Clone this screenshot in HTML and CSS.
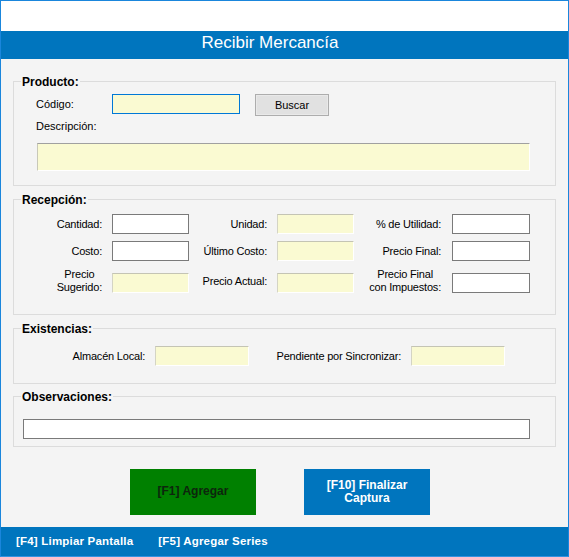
FILE: index.html
```html
<!DOCTYPE html>
<html lang="es">
<head>
<meta charset="utf-8">
<title>Recibir Mercancía</title>
<link rel="stylesheet" href="styles.css">
</head>
<body>
<div class="window">
  <div class="topbar"></div>
  <div class="header">Recibir Mercancía</div>
  <div class="content">
    <section class="group g-producto">
      <div class="group-title">Producto:</div>
      <div class="row-codigo">
        <span class="lbl lbl-codigo">Código:</span>
        <div class="field focus w128"></div>
        <button class="btn-buscar" type="button">Buscar</button>
      </div>
      <div class="lbl-desc">Descripción:</div>
      <div class="field ro desc"></div>
    </section>

    <section class="group g-recepcion">
      <div class="group-title">Recepción:</div>
      <div class="rec-grid">
        <span class="glbl c1">Cantidad:</span>
        <div class="field edit"></div>
        <span class="glbl c2">Unidad:</span>
        <div class="field ro"></div>
        <span class="glbl c3">% de Utilidad:</span>
        <div class="field edit"></div>

        <span class="glbl c1">Costo:</span>
        <div class="field edit"></div>
        <span class="glbl c2">Último Costo:</span>
        <div class="field ro"></div>
        <span class="glbl c3">Precio Final:</span>
        <div class="field edit"></div>

        <span class="glbl c1"><span class="two">Precio<br>Sugerido:</span></span>
        <div class="field ro low"></div>
        <span class="glbl c2">Precio Actual:</span>
        <div class="field ro low"></div>
        <span class="glbl c3"><span class="two">Precio Final<br>con Impuestos:</span></span>
        <div class="field edit low"></div>
      </div>
    </section>

    <section class="group g-existencias">
      <div class="group-title">Existencias:</div>
      <div class="ex-row">
        <span class="glbl ex1">Almacén Local:</span>
        <div class="field ro w94"></div>
        <span class="glbl ex2">Pendiente por Sincronizar:</span>
        <div class="field ro w94"></div>
      </div>
    </section>

    <section class="group g-observaciones">
      <div class="group-title">Observaciones:</div>
      <div class="field edit obs"></div>
    </section>

    <div class="actions">
      <button class="action green" type="button">[F1] Agregar</button>
      <button class="action blue" type="button">[F10] Finalizar<br>Captura</button>
    </div>
  </div>
  <div class="footer">
    <span>[F4] Limpiar Pantalla</span>
    <span>[F5] Agregar Series</span>
  </div>
</div>
</body>
</html>
```
FILE: styles.css
```css
* { box-sizing: border-box; }

html, body {
  margin: 0;
  padding: 0;
  background: #ffffff;
}

body {
  font-family: "Liberation Sans", Arial, sans-serif;
  font-size: 11px;
  color: #000;
}

.window {
  width: 569px;
  height: 557px;
  border-top: 1px solid #1a86dc;
  border-left: 1px solid #1a86dc;
  border-right: 1px solid #1a86dc;
  border-bottom: 1px solid #3392e0;
  display: flex;
  flex-direction: column;
  background: #fff;
}

.topbar {
  height: 30px;
  flex-shrink: 0;
  background: #fff;
}

.header {
  height: 28px;
  flex-shrink: 0;
  background: #0075be;
  color: #fff;
  font-size: 17px;
  line-height: 24px;
  padding: 0 29px 4px 0;
  text-align: center;
}

.content {
  flex: 1;
  background: #f4f4f4;
  padding: 22px 0 0 12px;
  display: flex;
  flex-direction: column;
}

.group {
  width: 543px;
  border: 1px solid #dcdcdc;
}

.group-title {
  width: fit-content;
  margin: -7px 0 0 7px;
  padding: 0 1px;
  background: #f4f4f4;
  font-weight: bold;
  font-size: 12px;
  line-height: 14px;
  height: 14px;
}

.field {
  height: 20px;
}

.field.edit {
  background: #fff;
  border: 1px solid #7a7a7a;
}

.field.ro {
  background: #fafad2;
  border-top: 1px solid #c4c4b4;
  border-left: 1px solid #d4d4c4;
  border-right: 1px solid #ffffff;
  border-bottom: 1px solid #ffffff;
}

.field.focus {
  background: #fafad2;
  border: 1px solid #0078d7;
}

/* Producto */
.g-producto {
  padding-bottom: 14px;
}

.row-codigo {
  display: flex;
  align-items: flex-start;
  margin-top: 5px;
  padding-left: 22px;
  height: 22px;
}

.lbl-codigo {
  width: 76px;
  line-height: 20px;
}

.w128 { width: 128px; }

.btn-buscar {
  margin: 0 0 0 15px;
  width: 74px;
  height: 22px;
  padding: 0;
  border: 1px solid #adadad;
  box-shadow: inset 0 0 0 1px #e9e9e9;
  background: #e1e1e1;
  font-family: "Liberation Sans", Arial, sans-serif;
  font-size: 11px;
  color: #000;
  line-height: 18px;
}

.lbl-desc {
  margin-top: 3px;
  padding-left: 22px;
  line-height: 14px;
  height: 14px;
}

.field.desc {
  margin: 10px 0 0 23px;
  width: 493px;
  height: 28px;
  border-top: 1px solid #a0a0a0;
  border-left: 1px solid #c8c8b8;
}

/* Recepción */
.g-recepcion {
  margin-top: 13px;
  padding-bottom: 20px;
}

.rec-grid {
  margin-top: 7px;
  display: grid;
  grid-template-columns: 98px 77px 88px 77px 98px 78px;
  grid-template-rows: 20px 20px 26px;
  row-gap: 7px;
  align-items: center;
}

.glbl {
  text-align: right;
  line-height: 14px;
  white-space: nowrap;
  letter-spacing: -0.2px;
}

.glbl.c1 { padding-right: 10px; }
.glbl.c2 { padding-right: 10px; }
.glbl.c3 { padding-right: 11px; }

.two {
  display: inline-block;
  text-align: center;
  line-height: 13px;
  margin-top: -1px;
}

.field.low {
  align-self: end;
  margin-bottom: 1px;
}

/* Existencias */
.g-existencias {
  margin-top: 13px;
  padding-bottom: 17px;
}

.ex-row {
  margin-top: 10px;
  display: grid;
  grid-template-columns: 141px 94px 162px 94px;
  align-items: center;
  height: 20px;
}

.glbl.ex1, .glbl.ex2 { padding-right: 10px; }

.w94 { width: 94px; }

/* Observaciones */
.g-observaciones {
  margin-top: 12px;
  padding-bottom: 7px;
}

.field.obs {
  margin: 15px 0 0 9px;
  width: 507px;
}

/* Actions */
.actions {
  margin-top: 22px;
  padding-left: 117px;
  display: flex;
  gap: 48px;
}

.action {
  width: 126px;
  height: 46px;
  margin: 0;
  padding: 0 0 2px 0;
  border: none;
  font-family: "Liberation Sans", Arial, sans-serif;
  font-weight: bold;
  font-size: 12px;
  line-height: 13px;
  display: flex;
  align-items: center;
  justify-content: center;
  text-align: center;
}

.action.green {
  background: #008000;
  color: #0d260d;
}

.action.blue {
  background: #0075be;
  color: #fff;
  padding-bottom: 1px;
}

/* Footer */
.footer {
  height: 29px;
  flex-shrink: 0;
  background: #0075be;
  color: #fff;
  font-weight: bold;
  font-size: 11.5px;
  letter-spacing: 0.2px;
  line-height: 28px;
  padding: 0 0 1px 15px;
  display: flex;
  gap: 25px;
}
```
